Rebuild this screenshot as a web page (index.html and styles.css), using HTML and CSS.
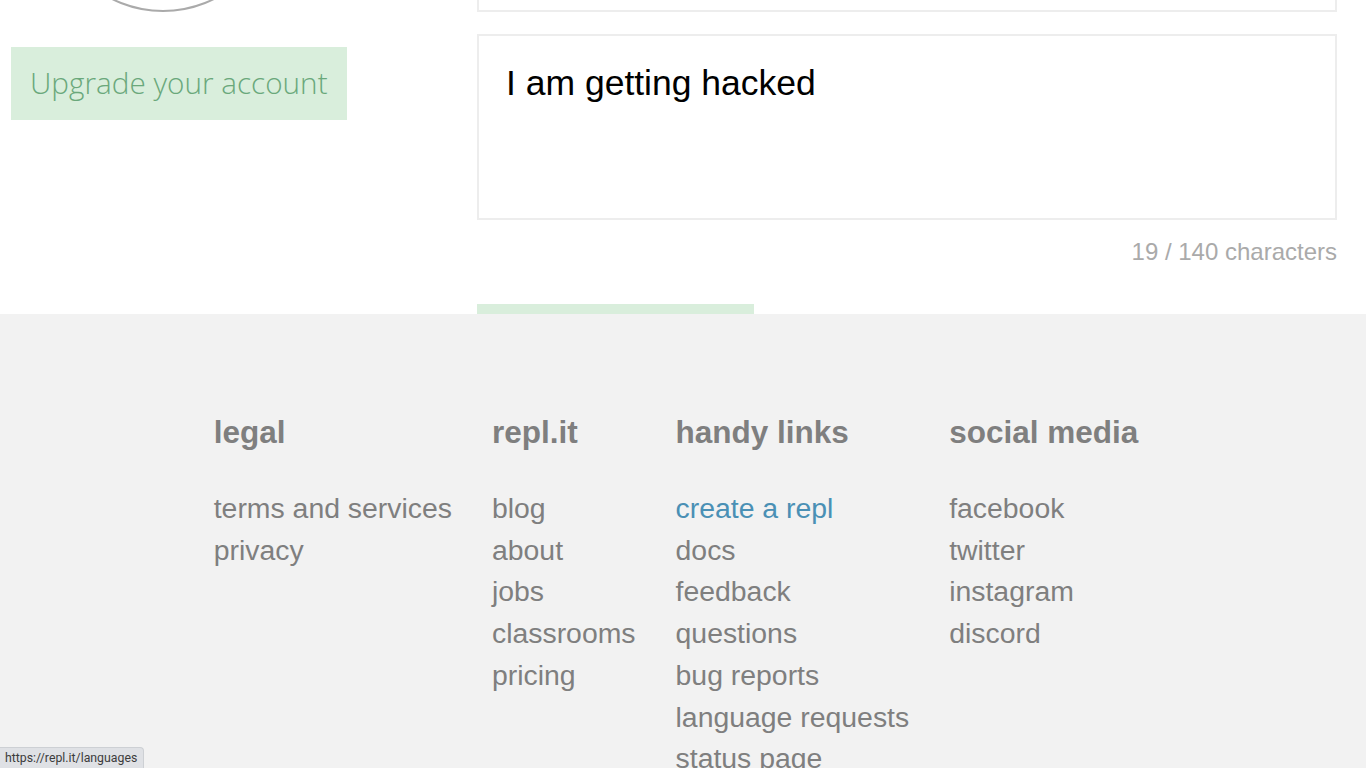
FILE: index.html
```html
<!DOCTYPE html>
<html lang="en">

<head>
    <meta charset="UTF-8">
    <meta name="viewport" content="width=device-width, initial-scale=1.0">
    <title>repl.it - settings</title>
    <link rel="stylesheet" href="styles.css">
</head>

<body>
    <div class="main">
        <div class="side">
            <div class="avatar-wrap">
                <div class="avatar"></div>
            </div>
            <a class="upgrade" href="#">Upgrade your account</a>
        </div>

        <div class="content">
            <div class="prev-box"></div>
            <textarea class="bio" maxlength="140">I am getting hacked</textarea>
            <div class="counter">19 / 140 characters</div>
            <div class="save"></div>
        </div>
    </div>

    <footer class="footer">
        <div class="footer-col">
            <h3>legal</h3>
            <ul>
                <li><a href="#">terms and services</a></li>
                <li><a href="#">privacy</a></li>
            </ul>
        </div>
        <div class="footer-col">
            <h3>repl.it</h3>
            <ul>
                <li><a href="#">blog</a></li>
                <li><a href="#">about</a></li>
                <li><a href="#">jobs</a></li>
                <li><a href="#">classrooms</a></li>
                <li><a href="#">pricing</a></li>
            </ul>
        </div>
        <div class="footer-col">
            <h3>handy links</h3>
            <ul>
                <li><a href="#" class="active">create a repl</a></li>
                <li><a href="#">docs</a></li>
                <li><a href="#">feedback</a></li>
                <li><a href="#">questions</a></li>
                <li><a href="#">bug reports</a></li>
                <li><a href="#">language requests</a></li>
                <li><a href="#">status page</a></li>
            </ul>
        </div>
        <div class="footer-col">
            <h3>social media</h3>
            <ul>
                <li><a href="#">facebook</a></li>
                <li><a href="#">twitter</a></li>
                <li><a href="#">instagram</a></li>
                <li><a href="#">discord</a></li>
            </ul>
        </div>
    </footer>

    <div class="status-bubble">https://repl.it/languages</div>
</body>

</html>
```

FILE: styles.css
```css
html {
    scrollbar-width: none;
}

body {
    font-family: "Liberation Sans", Arial, sans-serif;
    background-color: #fff;
    margin: 0;
    padding: 0;
}

.main {
    display: flex;
    padding: 0 29px 0 11px;
}

.side {
    width: 466px;
    flex-shrink: 0;
}

.avatar-wrap {
    height: 12px;
    overflow: hidden;
}

.avatar {
    box-sizing: border-box;
    width: 230px;
    height: 230px;
    margin: -218px 0 0 37px;
    border: 2px solid #aaa;
    border-radius: 50%;
}

.upgrade {
    display: inline-block;
    margin-top: 35px;
    width: 336px;
    height: 73px;
    line-height: 71px;
    box-sizing: border-box;
    padding-left: 19px;
    background-color: #d9eedc;
    color: #6aa87b;
    font-family: "Open Sans", sans-serif;
    font-weight: 300;
    font-size: 29.7px;
    text-decoration: none;
}

.content {
    flex: 1;
    display: flex;
    flex-direction: column;
}

.prev-box {
    height: 10px;
    border: 2px solid #ededed;
    border-top: none;
}

.bio {
    margin-top: 22px;
    height: 186px;
    box-sizing: border-box;
    padding: 27px 27px 23px 27px;
    border: 2px solid #ededed;
    font-family: "Liberation Sans", Arial, sans-serif;
    font-size: 35.5px;
    color: #000;
    resize: none;
    outline: none;
}

.counter {
    margin-top: 18px;
    text-align: right;
    font-size: 24px;
    color: #aaa;
}

.save {
    margin-top: 38px;
    width: 277px;
    height: 10px;
    background-color: #d9eedc;
}

.footer {
    background-color: #f2f2f2;
    display: flex;
    justify-content: center;
    gap: 40px;
    padding: 100px 14px 40px 0;
}

.footer-col h3 {
    margin: 0 0 37px 0;
    font-size: 31.5px;
    color: #7f7f7f;
}

.footer-col ul {
    list-style: none;
    margin: 0;
    padding: 0;
}

.footer-col li {
    font-size: 28.4px;
    line-height: 41.7px;
}

.footer-col a {
    color: #7f7f7f;
    text-decoration: none;
}

.footer-col a.active {
    color: #4a90b5;
}

.status-bubble {
    position: fixed;
    left: 0;
    bottom: 0;
    height: 20px;
    line-height: 20px;
    padding: 0 6px 0 5px;
    background-color: #dfe1e5;
    border-top: 1px solid #cdd0d4;
    border-right: 1px solid #cdd0d4;
    border-top-right-radius: 4px;
    font-family: Roboto, sans-serif;
    font-size: 12.3px;
    color: #3c3c3c;
}
```
